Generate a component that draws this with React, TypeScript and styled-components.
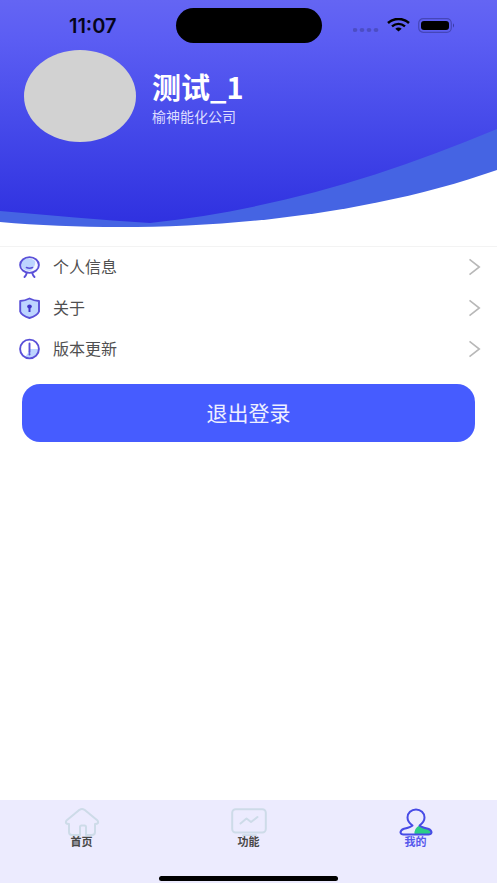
import React from 'react';
import styled, { createGlobalStyle } from 'styled-components';

const GlobalStyle = createGlobalStyle`
  * { box-sizing: border-box; }
  body {
    margin: 0;
    background: #fff;
    font-family: "Noto Sans", "Noto Sans CJK SC", sans-serif;
  }
`;

const Page = styled.div`
  display: flex;
  flex-direction: column;
  min-height: 100vh;
`;

const Header = styled.header`
  position: relative;
  height: 246px;
  flex-shrink: 0;
`;

const Backdrop = styled.svg`
  position: absolute;
  inset: 0;
  width: 100%;
  height: 100%;
`;

const StatusBar = styled.div`
  position: relative;
  display: grid;
  grid-template-columns: 1fr 146px 1fr;
  align-items: center;
  height: 50px;
`;

const Clock = styled.time`
  padding: 2px 0 0 10px;
  text-align: center;
  font: 600 20px/20px Inter, sans-serif;
  color: #05051a;
`;

const Island = styled.div`
  height: 35px;
  border-radius: 18px;
  background: #000;
`;

const Indicators = styled.div`
  display: flex;
  justify-content: flex-end;
  align-items: center;
  gap: 8px;
  padding-right: 42px;
`;

const Profile = styled.section`
  position: relative;
  display: flex;
  align-items: center;
  gap: 16px;
  padding: 0 24px;
`;

const Avatar = styled.div`
  width: 112px;
  height: 92px;
  border-radius: 50%;
  background: #d2d2d2;
`;

const ProfileText = styled.div`
  color: #fff;
`;

const UserName = styled.h1`
  margin: 0;
  font-family: "Noto Sans CJK SC", sans-serif;
  font-size: 29px;
  line-height: 40px;
  font-weight: 700;
`;

const Company = styled.p`
  margin: 0;
  font-family: "Noto Sans CJK SC", sans-serif;
  font-size: 14px;
  line-height: 20px;
  color: #dcdcff;
`;

const Main = styled.main`
  flex: 1;
`;

const MenuList = styled.nav`
  border-top: 1px solid #f3f3f3;
`;

const MenuRow = styled.a`
  display: flex;
  align-items: center;
  gap: 12px;
  height: 41px;
  padding: 0 16px 2px 18px;
  font-size: 16px;
  line-height: 24px;
  color: #505050;
  text-decoration: none;
`;

const MenuLabel = styled.span`
  flex: 1;
`;

const LogoutArea = styled.div`
  padding: 14px 22px;
`;

const LogoutButton = styled.button`
  width: 100%;
  height: 58px;
  border: 0;
  border-radius: 18px;
  background: #465cff;
  color: #eef0ff;
  font-family: inherit;
  font-size: 21px;
  line-height: 28px;
`;

const TabBar = styled.footer`
  background: #ecebfe;
  overflow: hidden;
`;

const Tabs = styled.nav`
  display: grid;
  grid-template-columns: repeat(3, 1fr);
  padding: 8px 0 28px;
  margin: 0 -2px;
`;

const Tab = styled.a<{ $active?: boolean }>`
  display: flex;
  flex-direction: column;
  align-items: center;
  font-size: 11px;
  line-height: 12px;
  font-weight: 700;
  color: ${(p) => (p.$active ? '#5658ec' : '#484848')};
  text-decoration: none;
`;

const HomeIndicator = styled.div`
  width: 36%;
  height: 5px;
  margin: 0 auto 2px;
  border-radius: 3px;
  background: #000;
`;

const HeaderBackdrop = () => (
  <Backdrop viewBox="0 0 497 246" preserveAspectRatio="none" aria-hidden="true">
    <defs>
      <linearGradient id="sky" x1="0" y1="0" x2="0" y2="223" gradientUnits="userSpaceOnUse">
        <stop offset="0" stopColor="#6465f3" />
        <stop offset="0.18" stopColor="#5b5df3" />
        <stop offset="0.55" stopColor="#464aea" />
        <stop offset="1" stopColor="#2f31e0" />
      </linearGradient>
    </defs>
    <path d="M0 0H497V170C340 225 150 235 0 222Z" fill="#4564e3" />
    <path d="M0 0H497V129C380 178 270 210 150 223C100 220 50 215 0 211Z" fill="url(#sky)" />
  </Backdrop>
);

const SignalIcon = () => (
  <svg width="26" height="18" viewBox="0 0 26 18" fill="#4c4dc4" aria-hidden="true">
    {[2, 9, 16, 23].map((x) => (
      <ellipse key={x} cx={x} cy="14" rx="2.4" ry="2" />
    ))}
  </svg>
);

const WifiIcon = () => (
  <svg width="23" height="14" viewBox="0 0 23 14" fill="none" stroke="#000" aria-hidden="true">
    <path d="M1 5C7-.4 16-.4 22 5" strokeWidth="2.5" />
    <path d="M5 8.4C9 5 14 5 18 8.4" strokeWidth="2.4" />
    <path d="M8.3 10.8C10.3 9.2 12.7 9.2 14.7 10.8L11.5 13.5Z" fill="#000" stroke="none" />
  </svg>
);

const BatteryIcon = () => (
  <svg width="37" height="15" viewBox="0 0 37 15" aria-hidden="true">
    <rect x="0.7" y="0.7" width="32.6" height="13.6" rx="4.5" fill="none" stroke="#4546b8" strokeWidth="1.2" />
    <rect x="3" y="3" width="28" height="9" rx="3" fill="#000" />
    <path d="M35 5.3Q37 7.5 35 9.7Z" fill="#3738a0" />
  </svg>
);

const iconProps = {
  width: 23,
  height: 24,
  viewBox: '0 0 23 24',
  fill: 'none',
  stroke: '#5a50d8',
  strokeWidth: 1.9,
  strokeLinecap: 'round' as const,
  strokeLinejoin: 'round' as const,
  'aria-hidden': true,
};

const PersonIcon = () => (
  <svg {...iconProps}>
    <ellipse cx="11.5" cy="10" rx="9.5" ry="7.9" fill="#f4f6ff" stroke="none" />
    <path d="M4 5C8 2 14 3 17 6C18 10 15 14 12 16C7 16 3 13 3 9Z" fill="#bdd5ff" stroke="none" />
    <ellipse cx="11.5" cy="10" rx="9.4" ry="7.9" />
    <path d="M8.5 12.6Q11.5 13.8 14.5 12.6" strokeWidth="1.6" />
    <path d="M8.8 18Q8.2 20.2 6.5 22M14.2 18Q14.8 20.2 16.5 22" />
  </svg>
);

const ShieldIcon = () => (
  <svg {...iconProps}>
    <path d="M11.5 2.5Q16 4.8 21 5V15.5Q19.5 19.5 11.5 22Q3.5 19.5 2.2 15.5V5Q7 4.8 11.5 2.5Z" fill="#bdd5ff" />
    <ellipse cx="11.5" cy="10.5" rx="2.3" ry="2.1" fill="#4035c8" stroke="none" />
    <path d="M11.5 10.5V16" stroke="#4035c8" strokeWidth="2" strokeLinecap="butt" />
  </svg>
);

const VersionIcon = () => (
  <svg {...iconProps}>
    <path d="M11.5 12H20.5A9 9 0 0 1 7 20Q10 17 11.5 12Z" fill="#bdd5ff" stroke="none" />
    <ellipse cx="11.5" cy="12" rx="9.4" ry="9.4" />
    <path d="M11.5 6.5V15M11.5 17V17.5" />
  </svg>
);

const ChevronIcon = () => (
  <svg width="13" height="18" viewBox="0 0 13 18" fill="none" stroke="#b8b8b8" strokeWidth="1.6" aria-hidden="true">
    <path d="M1.5 1.3L11.3 9L1.5 16.7" />
  </svg>
);

const HomeIcon = () => (
  <svg width="36" height="28" viewBox="0 0 36 28" fill="none" stroke="#cddbe8" strokeWidth="2" strokeLinejoin="round" aria-hidden="true">
    <path d="M15.5 1.8Q18 .4 20.5 1.8L33.5 12.5Q35.5 16 31 16V24Q31 27 28 27H22V19Q22 17.5 20.5 17.5H17.5Q16 17.5 16 19V27H8Q5 27 5 24V16Q.5 16 2.5 12.5Z" />
  </svg>
);

const MonitorIcon = () => (
  <svg width="36" height="28" viewBox="0 0 36 28" fill="none" stroke="#cddbe8" strokeWidth="2" strokeLinecap="round" strokeLinejoin="round" aria-hidden="true">
    <rect x="1.2" y="1.2" width="33.6" height="23.3" rx="3.5" />
    <path d="M9.5 15.5L15.5 10.5L20 14L26.5 9M12 27.2H25" />
  </svg>
);

const MineIcon = () => (
  <svg width="34" height="28" viewBox="0 0 34 28" fill="none" strokeLinejoin="round" aria-hidden="true">
    <path d="M20.5 17.5Q15 20 15.500 26.5H30Q33.5 24 31.5 21.5Z" fill="#2bcd87" />
    <path d="M13.5 17.5C10 15 8.5 12.5 8.5 9.5A8.5 8 0 0 1 25.5 9.5C25.5 12.5 24 15 20.5 17.5Q22 19 29 20.8Q32.5 22 32.5 24.5Q32 26.5 29.5 26.5H4.5Q2 26.5 1.5 24.5Q1.5 22 5 20.8Q12 19 13.5 17.5Z" stroke="#474be6" strokeWidth="2" />
  </svg>
);

const menuItems = [
  { label: '个人信息', Icon: PersonIcon },
  { label: '关于', Icon: ShieldIcon },
  { label: '版本更新', Icon: VersionIcon },
];

const tabs = [
  { label: '首页', Icon: HomeIcon, active: false },
  { label: '功能', Icon: MonitorIcon, active: false },
  { label: '我的', Icon: MineIcon, active: true },
];

export default function App() {
  return (
    <Page>
      <GlobalStyle />
      <Header>
        <HeaderBackdrop />
        <StatusBar>
          <Clock>11:07</Clock>
          <Island />
          <Indicators>
            <SignalIcon />
            <WifiIcon />
            <BatteryIcon />
          </Indicators>
        </StatusBar>
        <Profile>
          <Avatar />
          <ProfileText>
            <UserName>测试_1</UserName>
            <Company>榆神能化公司</Company>
          </ProfileText>
        </Profile>
      </Header>
      <Main>
        <MenuList>
          {menuItems.map(({ label, Icon }) => (
            <MenuRow href="#" key={label}>
              <Icon />
              <MenuLabel>{label}</MenuLabel>
              <ChevronIcon />
            </MenuRow>
          ))}
        </MenuList>
        <LogoutArea>
          <LogoutButton type="button">退出登录</LogoutButton>
        </LogoutArea>
      </Main>
      <TabBar>
        <Tabs>
          {tabs.map(({ label, Icon, active }) => (
            <Tab href="#" key={label} $active={active} aria-current={active ? 'page' : undefined}>
              <Icon />
              {label}
            </Tab>
          ))}
        </Tabs>
        <HomeIndicator />
      </TabBar>
    </Page>
  );
}
